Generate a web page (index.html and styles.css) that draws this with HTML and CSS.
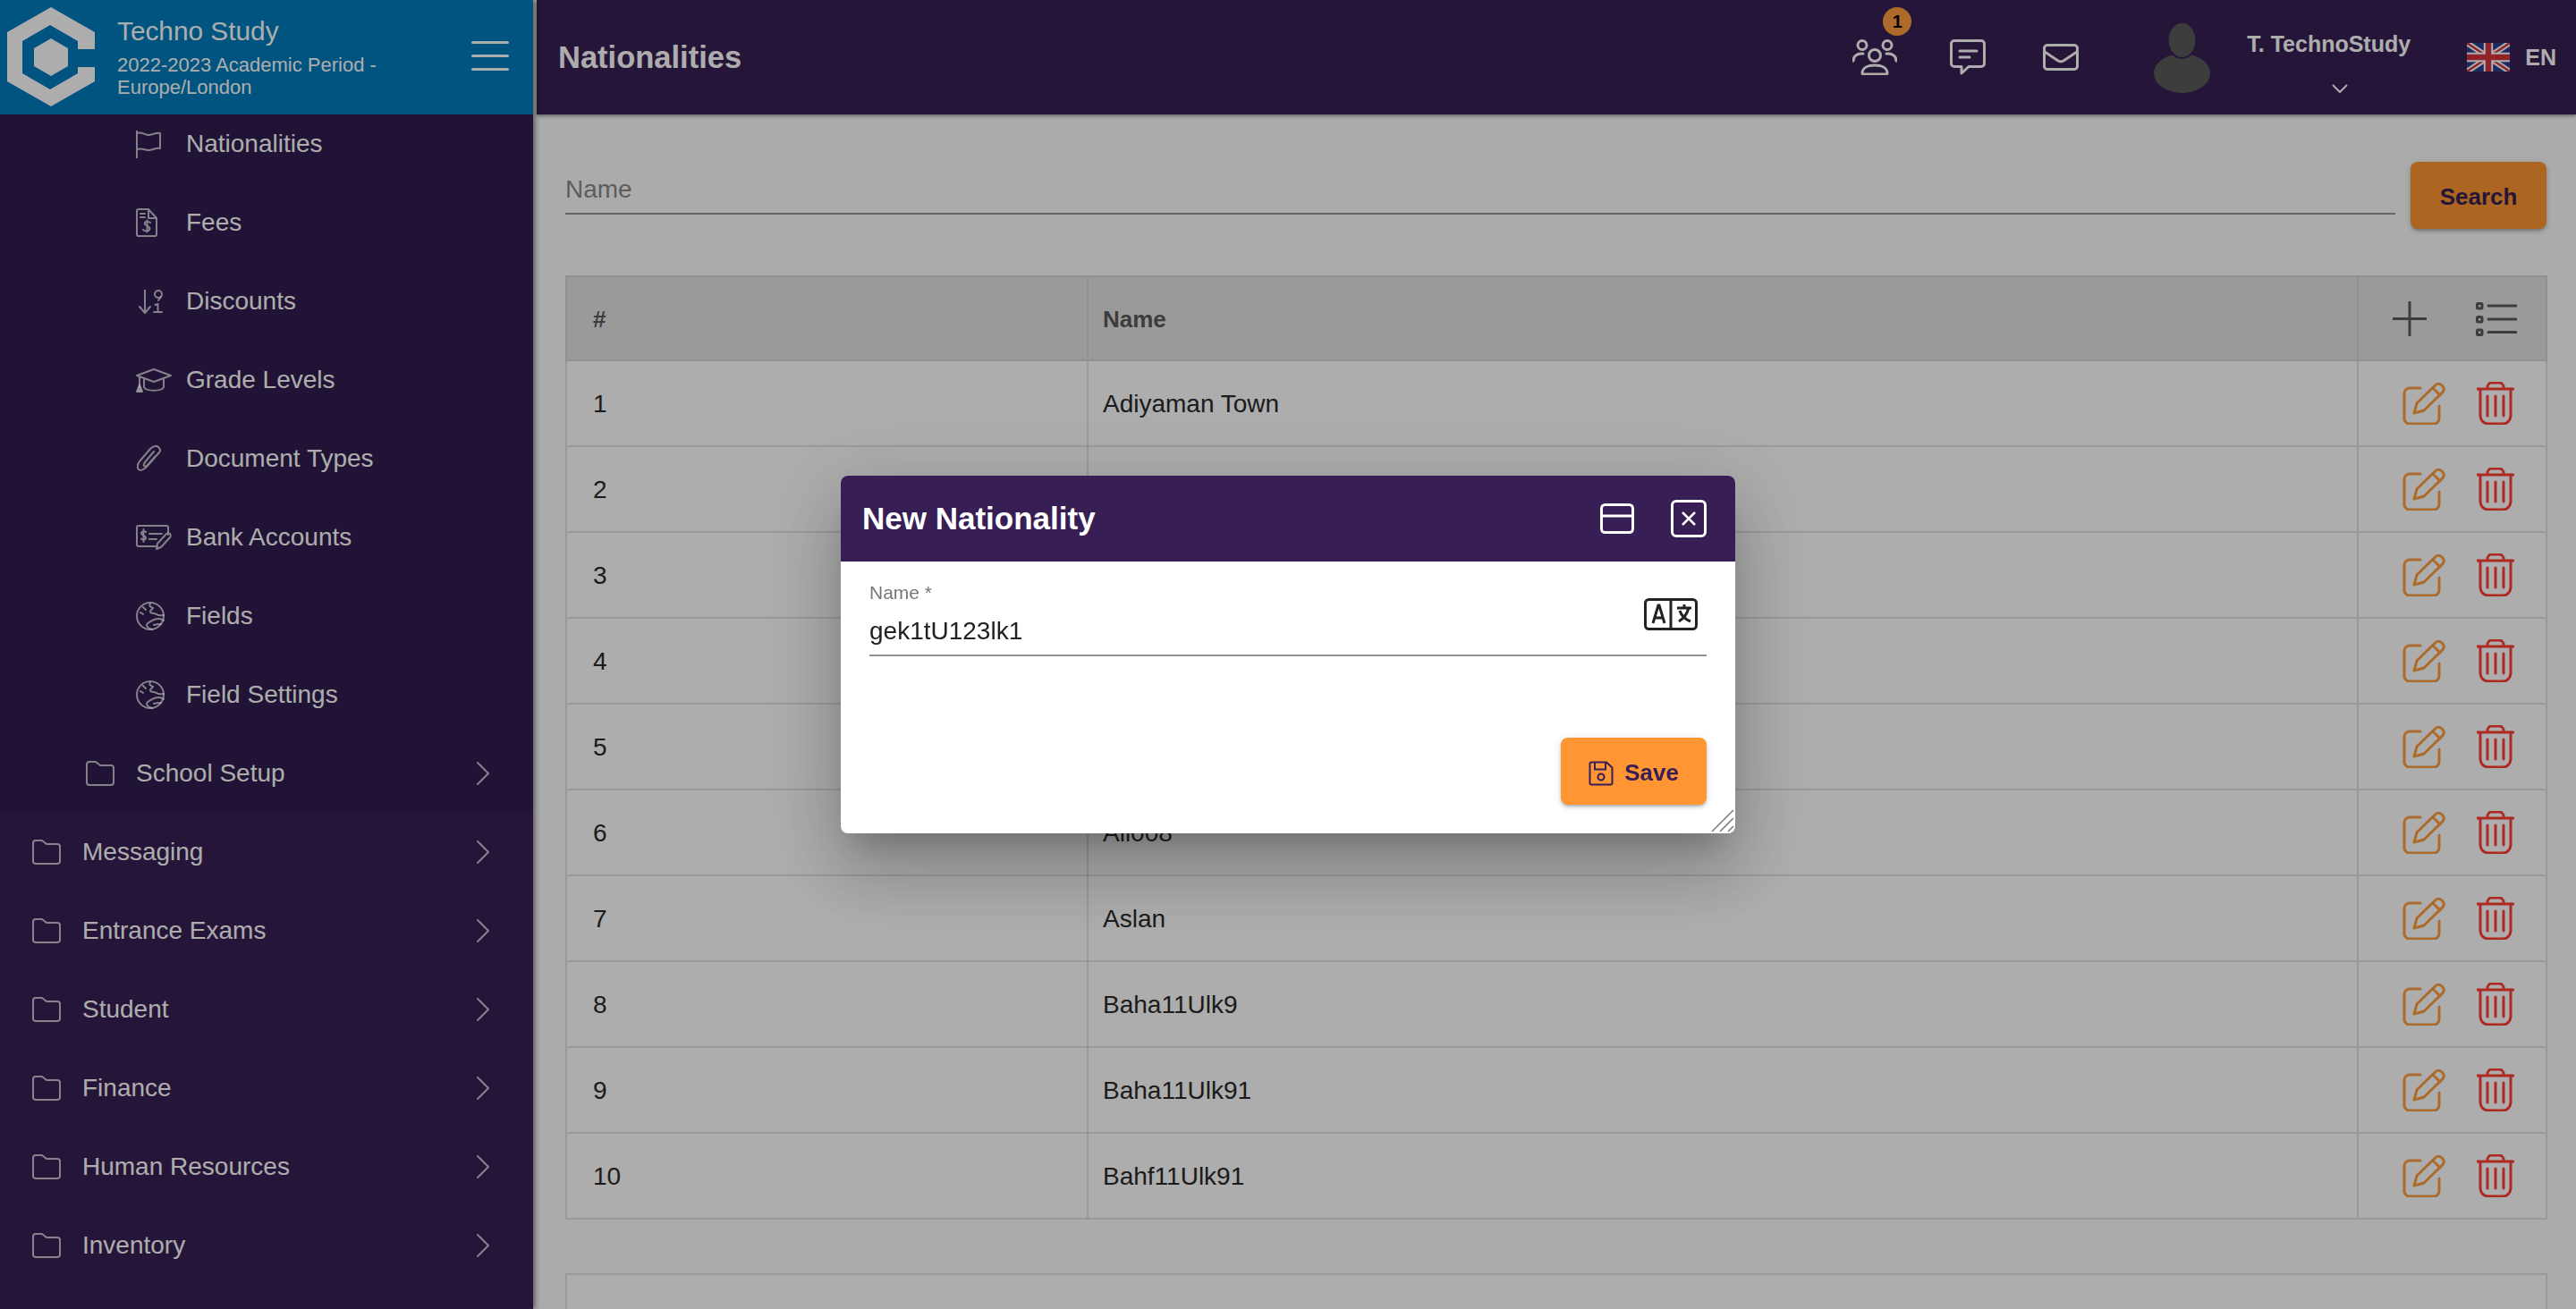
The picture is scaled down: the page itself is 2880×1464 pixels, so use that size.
FILE: index.html
```html
<!DOCTYPE html>
<html lang="en">
<head>
    <meta charset="UTF-8">
    <title>Nationalities</title>
    <link rel="stylesheet" href="styles.css">
</head>
<body>

    <!-- shared icons -->
    <svg class="icon-defs" width="0" height="0">
        <symbol id="i-folder" viewBox="0 0 32 28"><path d="M1 4a3 3 0 0 1 3-3h7l5 4h12a3 3 0 0 1 3 3v16a3 3 0 0 1-3 3H4a3 3 0 0 1-3-3z"/></symbol>
        <symbol id="i-chevron" viewBox="0 0 14 26"><path d="M1 1l12 12L1 25"/></symbol>
        <symbol id="i-globe" viewBox="0 0 32 32"><circle cx="16" cy="16" r="15"/><path d="M8 6l3 3M5 12l3 2M16 2c-2 3 1 4 3 5-1 2-3 2-3 4 0 3 5 1 7 3s4 1 8 1M31 21c-4-3-9-2-13 0-3 2-6 3-6 5s3 4 6 5M20 26c3-1 6-1 8-1"/></symbol>
        <symbol id="i-edit" viewBox="0 0 48 48"><path d="M20 7H8a6 6 0 0 0-6 6v28a6 6 0 0 0 6 6h27a6 6 0 0 0 6-6V27M13 35l3-11L37 3.5a4.5 4.5 0 0 1 6.4 0l1.6 1.6a4.5 4.5 0 0 1 0 6.4L24 32zM34 7l8 8"/></symbol>
        <symbol id="i-trash" viewBox="0 0 42 48"><path d="M1 8h40M12 8V6a5 5 0 0 1 5-5h8a5 5 0 0 1 5 5v2M4 8v30a9 9 0 0 0 9 9h16a9 9 0 0 0 9-9V8M12 16v22M21 16v22M30 16v22"/></symbol>
    </svg>

    <div class="app">
        <aside class="sidebar">
            <div class="brand">
                <svg class="brand-logo" viewBox="0 0 98 111" width="98" height="111">
                    <path class="logo-fill" d="M49 0l49 28v19H79V67h19v16l-49 28L0 83V28z"/>
                    <path class="logo-hole" d="M48 20L17 38v36l31 18 31-18V38z"/>
                    <path class="logo-fill" d="M49 35l19 11v20L49 77 30 66V46z"/>
                </svg>
                <div class="brand-text">
                    <div class="brand-title">Techno Study</div>
                    <div class="brand-sub">2022-2023 Academic Period - Europe/London</div>
                </div>
                <div class="burger"><span></span><span></span><span></span></div>
            </div>

            <nav class="side-list">
                <div class="side-group">
                    <a class="side-row sub">
                        <span class="side-icon"><svg class="line" width="28" height="31" viewBox="0 0 28 31"><path d="M1 0v31M1 3c6-2 9 2 13 2s8-3 13-2v17c-5-1-9 2-13 2s-7-3-13-1"/></svg></span>
                        Nationalities
                    </a>
                    <a class="side-row sub">
                        <span class="side-icon"><svg class="line" width="24" height="32" viewBox="0 0 24 32"><path d="M3 1h11l9 10v18a2 2 0 0 1-2 2H3a2 2 0 0 1-2-2V3a2 2 0 0 1 2-2zM14 1v10h9M5 6h5M5 10h5M16 16c-1-1-5-2-6 0s1 3 3 4 3 2 2 4-5 2-7 0M12.500 13.500v13"/></svg></span>
                        Fees
                    </a>
                    <a class="side-row sub">
                        <span class="side-icon disc"><svg class="line" width="28" height="27" viewBox="0 0 28 27"><path d="M7 0v26M1 19l6 7 6-7M17 25h9M21.500 25V16l-3 1"/><circle cx="22" cy="5" r="4"/><path d="M25 8l-3 4"/></svg></span>
                        Discounts
                    </a>
                    <a class="side-row sub">
                        <span class="side-icon"><svg class="line" width="40" height="27" viewBox="0 0 40 27"><path d="M20 1L1 8l19 7 19-7zM9 12v9c2 5 20 5 22 0v-9M4 9v12"/><path class="solid" d="M4 18l-3 8h6z"/></svg></span>
                        Grade Levels
                    </a>
                    <a class="side-row sub">
                        <span class="side-icon clip"><svg class="line" width="27" height="30" viewBox="0 0 27 30"><path d="M25 8L11 24c-3 3-7 5-9 3s-1-6 1-9L15 4c3-3 7-4 9-2s3 4 1 6zM19 7L9 19c-1 2-2 3-1 4s3 0 4-1l9-10"/></svg></span>
                        Document Types
                    </a>
                    <a class="side-row sub">
                        <span class="side-icon"><svg class="line" width="40" height="28" viewBox="0 0 40 28"><path d="M24 24H3a2 2 0 0 1-2-2V3a2 2 0 0 1 2-2h31a2 2 0 0 1 2 2v8M11 8c-1-1-5-1-5 1.500s5 2 5 5-4 2.500-5 1M8.500 5v14M15 10h14M15 16h8M23 27l1-6 10-11c1-1 3-1 4 0s1 3 0 4L28 25z"/></svg></span>
                        Bank Accounts
                    </a>
                    <a class="side-row sub">
                        <span class="side-icon"><svg class="line" width="32" height="32"><use href="#i-globe"/></svg></span>
                        Fields
                    </a>
                    <a class="side-row sub">
                        <span class="side-icon"><svg class="line" width="32" height="32"><use href="#i-globe"/></svg></span>
                        Field Settings
                    </a>
                    <a class="side-row mid">
                        <span class="side-icon"><svg class="line" width="32" height="28"><use href="#i-folder"/></svg></span>
                        School Setup
                        <svg class="line chevron" width="14" height="26"><use href="#i-chevron"/></svg>
                    </a>
                </div>
                <a class="side-row top">
                    <span class="side-icon"><svg class="line" width="32" height="28"><use href="#i-folder"/></svg></span>
                    Messaging
                    <svg class="line chevron" width="14" height="26"><use href="#i-chevron"/></svg>
                </a>
                <a class="side-row top">
                    <span class="side-icon"><svg class="line" width="32" height="28"><use href="#i-folder"/></svg></span>
                    Entrance Exams
                    <svg class="line chevron" width="14" height="26"><use href="#i-chevron"/></svg>
                </a>
                <a class="side-row top">
                    <span class="side-icon"><svg class="line" width="32" height="28"><use href="#i-folder"/></svg></span>
                    Student
                    <svg class="line chevron" width="14" height="26"><use href="#i-chevron"/></svg>
                </a>
                <a class="side-row top">
                    <span class="side-icon"><svg class="line" width="32" height="28"><use href="#i-folder"/></svg></span>
                    Finance
                    <svg class="line chevron" width="14" height="26"><use href="#i-chevron"/></svg>
                </a>
                <a class="side-row top">
                    <span class="side-icon"><svg class="line" width="32" height="28"><use href="#i-folder"/></svg></span>
                    Human Resources
                    <svg class="line chevron" width="14" height="26"><use href="#i-chevron"/></svg>
                </a>
                <a class="side-row top">
                    <span class="side-icon"><svg class="line" width="32" height="28"><use href="#i-folder"/></svg></span>
                    Inventory
                    <svg class="line chevron" width="14" height="26"><use href="#i-chevron"/></svg>
                </a>
            </nav>
        </aside>

        <main class="main">
            <header class="topbar">
                <h1 class="page-title">Nationalities</h1>

                <div class="people">
                    <svg class="bar-icon" width="50" height="40" viewBox="0 0 50 40"><circle cx="25" cy="18" r="6.500"/><circle cx="11" cy="6.500" r="5"/><circle cx="39" cy="6.500" r="5"/><path d="M1 24c0-5 4-8 9-8h2M49 24c0-5-4-8-9-8h-2M11 38c0-6 6-9 14-9s14 3 14 9c0 1-1 1-2 1H13c-1 0-2 0-2-1z"/></svg>
                    <span class="badge">1</span>
                </div>
                <svg class="bar-icon chat" width="40" height="40" viewBox="0 0 40 40"><path d="M5 1.500h30a3.500 3.500 0 0 1 3.500 3.500v22a3.500 3.500 0 0 1-3.500 3.500H21L13 38v-7.500H5A3.500 3.500 0 0 1 1.500 27V5A3.500 3.500 0 0 1 5 1.500zM11 13h19M11 20h11"/></svg>
                <svg class="bar-icon mail" width="40" height="30" viewBox="0 0 40 30"><rect x="1.500" y="1.500" width="37" height="27" rx="3.500"/><path d="M2 9l15 10c2 1 4 1 6 0l15-10"/></svg>
                <svg class="avatar" width="63" height="79" viewBox="0 0 63 79"><ellipse class="avatar-fill" cx="31.500" cy="57" rx="31.500" ry="22"/><ellipse class="avatar-fill avatar-head" cx="31.500" cy="20" rx="16" ry="20"/></svg>
                <div class="user">
                    <div class="user-name">T. TechnoStudy</div>
                    <svg class="user-caret" width="18" height="10" viewBox="0 0 18 10"><path d="M1 1l8 8 8-8"/></svg>
                </div>
                <svg class="uk-flag" width="48" height="32" viewBox="0 0 60 40">
                    <rect width="60" height="40" fill="#2a3f8f"/>
                    <path d="M0 0l60 40M60 0L0 40" stroke="#fff" stroke-width="8"/>
                    <path d="M0 0l60 40M60 0L0 40" stroke="#d8313f" stroke-width="3"/>
                    <path d="M30 0v40M0 20h60" stroke="#fff" stroke-width="13"/>
                    <path d="M30 0v40M0 20h60" stroke="#d8313f" stroke-width="8"/>
                </svg>
                <span class="lang">EN</span>
            </header>

            <section class="content">
                <div class="search-row">
                    <div class="search-field">Name</div>
                    <button class="btn search-btn">Search</button>
                </div>

                <table class="grid">
                    <colgroup>
                        <col class="col-num">
                        <col>
                        <col class="col-act">
                    </colgroup>
                    <thead>
                        <tr>
                            <th>#</th>
                            <th>Name</th>
                            <th>
                                <div class="acts head-acts">
                                    <svg class="head-icon" width="38" height="39" viewBox="0 0 38 39"><path d="M19 1v37M1 19.500h36"/></svg>
                                    <svg class="head-icon" width="47" height="39" viewBox="0 0 47 39"><rect class="dot" x="2.500" y="2.500" width="5.500" height="5.500" rx="1"/><rect class="dot" x="2.500" y="17.500" width="5.500" height="5.500" rx="1"/><rect class="dot" x="2.500" y="32" width="5.500" height="5.500" rx="1"/><path d="M15 5h31M15 20h31M15 34.500h31"/></svg>
                                </div>
                            </th>
                        </tr>
                    </thead>
                    <tbody>
                        <tr><td>1</td><td>Adiyaman Town</td><td><div class="acts"><svg class="edit" width="48" height="48"><use href="#i-edit"/></svg><svg class="trash" width="42" height="48"><use href="#i-trash"/></svg></div></td></tr>
                        <tr><td>2</td><td>Afghan</td><td><div class="acts"><svg class="edit" width="48" height="48"><use href="#i-edit"/></svg><svg class="trash" width="42" height="48"><use href="#i-trash"/></svg></div></td></tr>
                        <tr><td>3</td><td>Albanian</td><td><div class="acts"><svg class="edit" width="48" height="48"><use href="#i-edit"/></svg><svg class="trash" width="42" height="48"><use href="#i-trash"/></svg></div></td></tr>
                        <tr><td>4</td><td>Algerian</td><td><div class="acts"><svg class="edit" width="48" height="48"><use href="#i-edit"/></svg><svg class="trash" width="42" height="48"><use href="#i-trash"/></svg></div></td></tr>
                        <tr><td>5</td><td>Ali007</td><td><div class="acts"><svg class="edit" width="48" height="48"><use href="#i-edit"/></svg><svg class="trash" width="42" height="48"><use href="#i-trash"/></svg></div></td></tr>
                        <tr><td>6</td><td>Ali008</td><td><div class="acts"><svg class="edit" width="48" height="48"><use href="#i-edit"/></svg><svg class="trash" width="42" height="48"><use href="#i-trash"/></svg></div></td></tr>
                        <tr><td>7</td><td>Aslan</td><td><div class="acts"><svg class="edit" width="48" height="48"><use href="#i-edit"/></svg><svg class="trash" width="42" height="48"><use href="#i-trash"/></svg></div></td></tr>
                        <tr><td>8</td><td>Baha11Ulk9</td><td><div class="acts"><svg class="edit" width="48" height="48"><use href="#i-edit"/></svg><svg class="trash" width="42" height="48"><use href="#i-trash"/></svg></div></td></tr>
                        <tr><td>9</td><td>Baha11Ulk91</td><td><div class="acts"><svg class="edit" width="48" height="48"><use href="#i-edit"/></svg><svg class="trash" width="42" height="48"><use href="#i-trash"/></svg></div></td></tr>
                        <tr><td>10</td><td>Bahf11Ulk91</td><td><div class="acts"><svg class="edit" width="48" height="48"><use href="#i-edit"/></svg><svg class="trash" width="42" height="48"><use href="#i-trash"/></svg></div></td></tr>
                    </tbody>
                </table>

                <div class="pager-card"></div>
            </section>
        </main>
    </div>

    <!-- New Nationality dialog -->
    <div class="backdrop">
        <div class="dialog">
            <div class="dialog-head">
                <h2 class="dialog-title">New Nationality</h2>
                <svg class="dialog-split" width="38" height="34" viewBox="0 0 38 34"><rect x="1.500" y="1.500" width="35" height="31" rx="4"/><path d="M1.500 14h35"/></svg>
                <span class="dialog-close">
                    <svg width="16" height="16" viewBox="0 0 16 16"><path d="M1 1l14 14M15 1L1 15"/></svg>
                </span>
            </div>
            <div class="dialog-body">
                <div class="field">
                    <div>
                        <div class="field-label">Name *</div>
                        <div class="field-value">gek1tU123lk1</div>
                    </div>
                    <svg class="translate" width="60" height="36" viewBox="0 0 60 36"><rect x="1.500" y="1.500" width="57" height="33" rx="4"/><path d="M30 1.500v33M10 28l6-20h1l6 20M12 22h9M37 11h16M45 7v4M50 11c-2 7-6 12-11 15M40 14c2 6 7 10 12 12"/></svg>
                </div>
                <button class="btn save-btn">
                    <svg width="28" height="28" viewBox="0 0 28 28"><path d="M3 1.500h17l6.500 6V25a1.500 1.500 0 0 1-1.500 1.500H3A1.500 1.500 0 0 1 1.500 25V3A1.500 1.500 0 0 1 3 1.500zM7 1.500v8h12v-8"/><circle cx="14" cy="18" r="3.500"/></svg>
                    Save
                </button>
            </div>
            <svg class="resize" width="26" height="26" viewBox="0 0 26 26"><path d="M1 25L25 1M10 25L25 10M19 25l6-6"/></svg>
        </div>
    </div>

</body>
</html>
```

FILE: styles.css
```css
/* General page */
* {
    box-sizing: border-box;
}
body {
    margin: 0;
    height: 100vh;
    overflow: hidden;
    font-family: "Liberation Sans", Arial, sans-serif;
    font-size: 28px;
    color: #2a2a2a;
    background-color: #fdfdfd;
}
.icon-defs {
    position: absolute;
}
.app {
    display: flex;
    height: 100vh;
}

/* Sidebar */
.sidebar {
    width: 596px;
    flex: none;
    display: flex;
    flex-direction: column;
    overflow: hidden;
    background-color: #371f55;
    color: #fff;
    box-shadow: 2px 0 6px rgba(0, 0, 0, 0.5);
    position: relative;
    z-index: 3;
}
.brand {
    height: 128px;
    flex: none;
    display: flex;
    align-items: flex-start;
    padding-left: 8px;
    background-color: #007cbc;
    position: relative;
    z-index: 1;
}
.brand-logo {
    margin: 8px 25px 0 0;
    flex: none;
}
.logo-fill {
    fill: #fff;
}
.logo-hole {
    fill: #007cbc;
}
.brand-text {
    width: 370px;
    margin-top: 18px;
}
.brand-title {
    font-size: 29.800px;
    line-height: 34px;
}
.brand-sub {
    font-size: 22px;
    line-height: 25px;
    margin-top: 8px;
}
.burger {
    margin: 46px 27px 0 auto;
    width: 42px;
    display: flex;
    flex-direction: column;
    gap: 12px;
}
.burger span {
    height: 3px;
    border-radius: 2px;
    background-color: #fff;
}
.side-list {
    margin-top: -11px;
}
.side-group {
    background-color: #301c4e;
}
.side-row {
    height: 88px;
    display: flex;
    align-items: center;
    padding-right: 49px;
}
.side-row.sub {
    padding-left: 152px;
}
.side-row.mid {
    padding-left: 96px;
}
.side-row.top {
    padding-left: 36px;
}
.side-icon {
    width: 56px;
    flex: none;
    display: flex;
    align-items: center;
}
.side-icon.disc {
    padding-left: 3px;
}
.side-icon.clip {
    padding-left: 1px;
}
.line {
    fill: none;
    stroke: rgba(255, 255, 255, 0.72);
    stroke-width: 2;
    stroke-linecap: round;
    stroke-linejoin: round;
}
.line .solid {
    fill: rgba(255, 255, 255, 0.72);
}
.chevron {
    margin-left: auto;
}

/* Top bar */
.main {
    flex: 1;
    min-width: 0;
    margin-left: 4px;
    display: flex;
    flex-direction: column;
}
.topbar {
    height: 128px;
    flex: none;
    display: flex;
    align-items: center;
    padding: 0 22px 0 24px;
    color: #fff;
    background-color: #371f55;
    box-shadow: 0 2px 4px rgba(0, 0, 0, 0.4);
    position: relative;
    z-index: 2;
}
.page-title {
    margin: 0;
    font-size: 34.500px;
    font-weight: bold;
}
.people {
    position: relative;
    height: 40px;
    margin-left: auto;
}
.bar-icon {
    display: block;
    fill: none;
    stroke: #fff;
    stroke-width: 3;
    stroke-linecap: round;
    stroke-linejoin: round;
}
.badge {
    position: absolute;
    top: -36px;
    left: 34px;
    width: 32px;
    height: 32px;
    border-radius: 50%;
    background-color: #ff9d3f;
    color: #000;
    font-size: 20px;
    font-weight: bold;
    line-height: 32px;
    text-align: center;
}
.chat {
    margin-left: 59px;
}
.mail {
    margin-left: 64px;
}
.avatar {
    margin-left: 84px;
}
.avatar-fill {
    fill: #5a5a5a;
}
.avatar-head {
    stroke: #371f55;
    stroke-width: 2;
}
.user {
    margin-left: 41px;
    width: 184px;
    align-self: flex-start;
    padding-top: 34px;
}
.user-name {
    font-size: 25px;
    font-weight: bold;
    line-height: 30px;
    white-space: nowrap;
}
.user-caret {
    display: block;
    margin: 30px 0 0 95px;
    fill: none;
    stroke: #fff;
    stroke-width: 2;
}
.uk-flag {
    margin-left: 62px;
}
.lang {
    margin-left: 17px;
    font-size: 25px;
    font-weight: bold;
}

/* Search row */
.content {
    flex: 1;
    overflow: hidden;
    padding: 53px 32px 0;
}
.search-row {
    display: flex;
    align-items: flex-start;
    gap: 17px;
    margin-right: 1px;
}
.search-field {
    flex: 1;
    height: 59px;
    padding-top: 15px;
    line-height: 32px;
    color: #8a8a8a;
    border-bottom: 2px solid #959595;
}
.btn {
    border: 0;
    border-radius: 8px;
    padding: 4px 0 0;
    font-family: inherit;
    font-size: 26px;
    font-weight: bold;
    color: #371f55;
    background-color: #ff9533;
    box-shadow: 0 3px 3px -2px rgba(0, 0, 0, 0.2), 0 3px 4px rgba(0, 0, 0, 0.14), 0 1px 8px rgba(0, 0, 0, 0.12);
}
.search-btn {
    width: 152px;
    height: 75px;
}

/* Table */
.grid {
    width: 100%;
    margin-top: 52px;
    table-layout: fixed;
    border-collapse: collapse;
    background-color: #fff;
}
.col-num {
    width: 583px;
}
.col-act {
    width: 211px;
}
.grid th,
.grid td {
    height: 96px;
    padding: 2px 0 0 16px;
    border: 2px solid #e2e2e2;
    text-align: left;
}
.grid td:first-child,
.grid th:first-child {
    padding-left: 29px;
}
.grid th:last-child,
.grid td:last-child {
    padding: 0;
}
.grid th {
    height: 94px;
    font-size: 26px;
    color: #5a5a5a;
    background-color: #e4e4e4;
    border-color: #d6d6d6;
}
.acts {
    display: flex;
    align-items: center;
    gap: 35px;
    padding-left: 49px;
    fill: none;
    stroke-width: 3;
    stroke-linecap: round;
    stroke-linejoin: round;
}
.head-acts {
    gap: 54px;
    padding-left: 38px;
}
.head-icon {
    stroke: #5a5a5a;
}
.edit {
    stroke: #ff9d3f;
}
.trash {
    stroke: #ff3d33;
}
.pager-card {
    height: 120px;
    margin-top: 60px;
    border: 2px solid #e2e2e2;
    background-color: #fff;
}

/* Dialog */
.backdrop {
    position: fixed;
    inset: 0;
    z-index: 10;
    display: flex;
    align-items: center;
    justify-content: center;
    background-color: rgba(0, 0, 0, 0.32);
}
.dialog {
    width: 1000px;
    height: 400px;
    display: flex;
    flex-direction: column;
    position: relative;
    overflow: hidden;
    border-radius: 8px;
    background-color: #fff;
    box-shadow: 0 22px 30px -14px rgba(0, 0, 0, 0.2), 0 48px 76px 6px rgba(0, 0, 0, 0.14), 0 18px 92px 16px rgba(0, 0, 0, 0.12);
}
.dialog-head {
    height: 96px;
    flex: none;
    display: flex;
    align-items: center;
    padding: 0 32px 0 24px;
    color: #fff;
    background-color: #371f55;
}
.dialog-title {
    margin: 0 auto 0 0;
    font-size: 35px;
    font-weight: bold;
}
.dialog-split {
    fill: none;
    stroke: #fff;
    stroke-width: 3;
    margin-right: 41px;
}
.dialog-close {
    width: 40px;
    height: 42px;
    display: flex;
    align-items: center;
    justify-content: center;
    border: 3px solid #fff;
    border-radius: 6px;
    fill: none;
    stroke: #fff;
    stroke-width: 2.500;
}
.dialog-body {
    flex: 1;
    display: flex;
    flex-direction: column;
    justify-content: space-between;
    padding: 23px 32px 32px;
}
.field {
    display: flex;
    justify-content: space-between;
    height: 83px;
    border-bottom: 2px solid #949494;
    color: #212121;
}
.field-label {
    font-size: 21px;
    line-height: 24px;
    color: #777;
}
.field-value {
    margin-top: 14px;
    line-height: 34px;
}
.translate {
    margin: 18px 10px 0 0;
    fill: none;
    stroke: #222;
    stroke-width: 3;
}
.save-btn {
    align-self: flex-end;
    width: 163px;
    height: 75px;
    display: flex;
    align-items: center;
    justify-content: center;
    gap: 12px;
}
.save-btn svg {
    fill: none;
    stroke: #371f55;
    stroke-width: 2;
}
.resize {
    position: absolute;
    right: 1px;
    bottom: 1px;
    fill: none;
    stroke: #777;
    stroke-width: 1.500;
}
```
